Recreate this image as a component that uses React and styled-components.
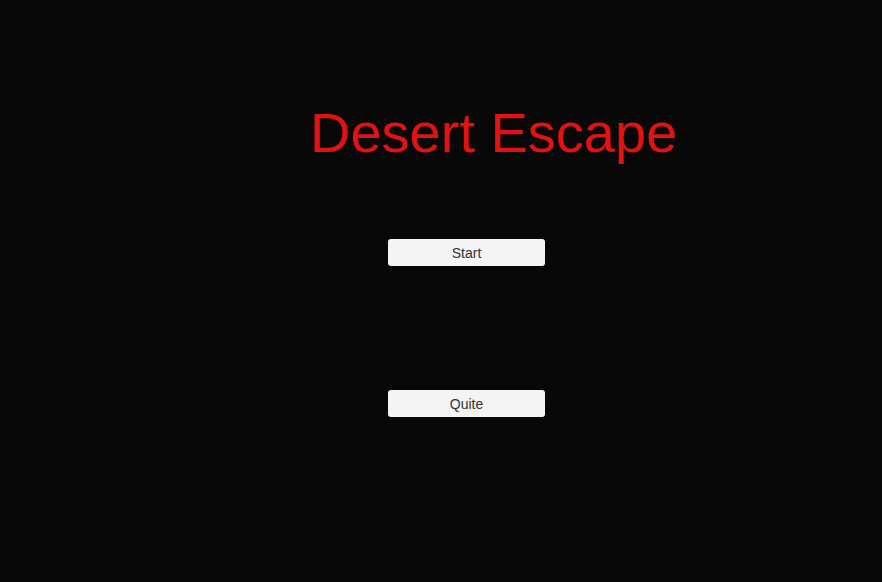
import React from "react";
import styled, { createGlobalStyle } from "styled-components";

const GlobalStyle = createGlobalStyle`
  html, body {
    margin: 0;
    padding: 0;
    background-color: #080808;
  }

  body {
    font-family: "Liberation Sans", Arial, sans-serif;
  }
`;

const App = () => {
  return (
    <>
      <GlobalStyle />
      <StyledMenu>
        <Title>Desert Escape</Title>

        <ButtonList>
          <MenuButton type="button">Start</MenuButton>
          <MenuButton type="button">Quite</MenuButton>
        </ButtonList>
      </StyledMenu>
    </>
  );
};

export default App;

const StyledMenu = styled.main`
  width: 882px;
  height: 582px;
  box-sizing: border-box;
  padding-top: 105px;
  display: flex;
  flex-direction: column;
  background-color: #080808;
  overflow: hidden;
`;

const Title = styled.h1`
  margin: 0 0 0 310px;
  font-size: 56px;
  font-weight: 400;
  line-height: 1;
  color: #e21213;
  white-space: nowrap;
`;

const ButtonList = styled.div`
  margin: 78px 0 0 388px;
  display: flex;
  flex-direction: column;
  gap: 124px;
`;

const MenuButton = styled.button`
  width: 157px;
  height: 27px;
  padding: 0;
  border: none;
  border-radius: 3px;
  background-color: #f4f4f4;
  color: #323232;
  font-family: "Liberation Sans", Arial, sans-serif;
  font-size: 14px;
  cursor: pointer;
`;
